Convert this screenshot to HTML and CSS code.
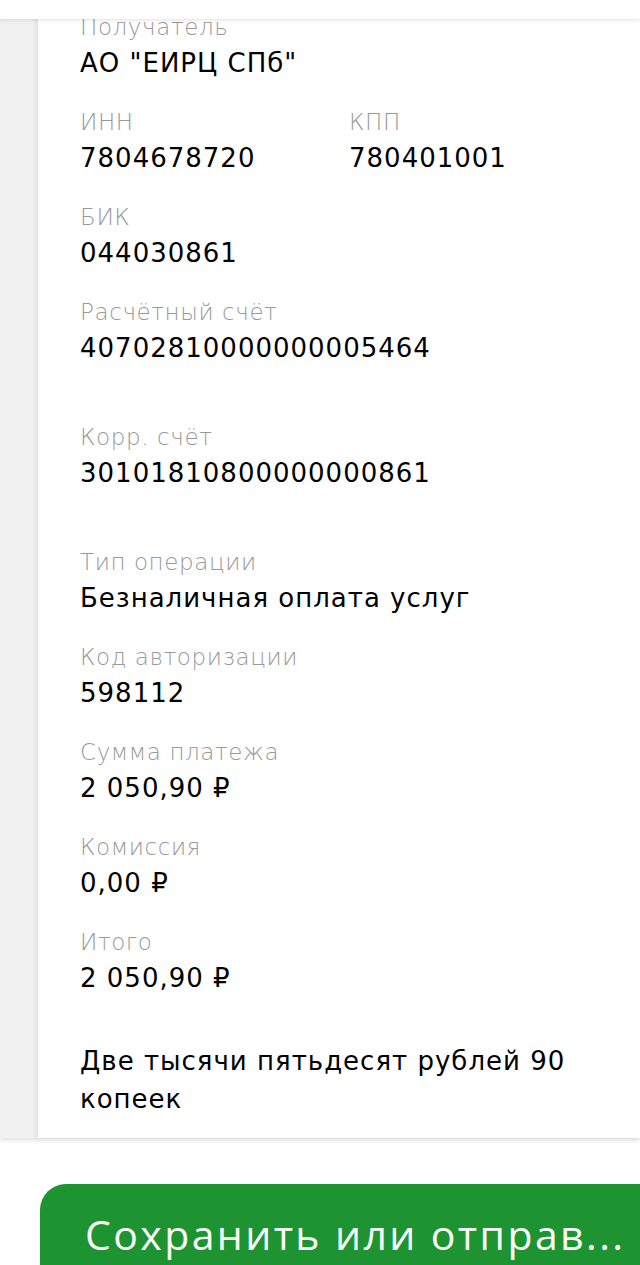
FILE: index.html
```html
<!DOCTYPE html>
<html lang="ru">
<head>
<meta charset="utf-8">
<title>Реквизиты платежа</title>
<link rel="stylesheet" href="styles.css">
</head>
<body>
<div class="topbar"></div>
<div class="main">
  <div class="rail"></div>
  <div class="card">
    <div class="field">
      <div class="label">Получатель</div>
      <div class="value">АО "ЕИРЦ СПб"</div>
    </div>
    <div class="field row">
      <div>
        <div class="label">ИНН</div>
        <div class="value">7804678720</div>
      </div>
      <div>
        <div class="label">КПП</div>
        <div class="value">780401001</div>
      </div>
    </div>
    <div class="field">
      <div class="label">БИК</div>
      <div class="value">044030861</div>
    </div>
    <div class="field extra">
      <div class="label">Расчётный счёт</div>
      <div class="value">40702810000000005464</div>
    </div>
    <div class="field extra">
      <div class="label">Корр. счёт</div>
      <div class="value">30101810800000000861</div>
    </div>
    <div class="field">
      <div class="label">Тип операции</div>
      <div class="value">Безналичная оплата услуг</div>
    </div>
    <div class="field">
      <div class="label">Код авторизации</div>
      <div class="value">598112</div>
    </div>
    <div class="field">
      <div class="label">Сумма платежа</div>
      <div class="value">2 050,90 ₽</div>
    </div>
    <div class="field">
      <div class="label">Комиссия</div>
      <div class="value">0,00 ₽</div>
    </div>
    <div class="field">
      <div class="label">Итого</div>
      <div class="value">2 050,90 ₽</div>
    </div>
    <div class="words">Две тысячи пятьдесят рублей 90 копеек</div>
  </div>
</div>
<div class="actions">
  <button class="save">Сохранить или отправ...</button>
</div>
</body>
</html>
```
FILE: styles.css
```css
html, body {
  margin: 0;
  padding: 0;
}
body {
  width: 640px;
  height: 1265px;
  overflow: hidden;
  background: #ffffff;
  font-family: "DejaVu Sans", "Liberation Sans", sans-serif;
}
.topbar {
  position: relative;
  z-index: 2;
  height: 19px;
  background: #ffffff;
  box-shadow: 0 1px 4px rgba(0, 0, 0, 0.12);
}
.main {
  display: flex;
  margin-top: -19px;
  box-shadow: 0 3px 4px rgba(0, 0, 0, 0.10);
}
.rail {
  width: 38px;
  flex: none;
  background: #f1f1f1;
}
.card {
  flex: 1;
  background: #ffffff;
  padding: 12px 16px 20px 42px;
  box-shadow: -2px 0 4px rgba(0, 0, 0, 0.07);
}
.field {
  margin-bottom: 24px;
}
.field.extra {
  margin-bottom: 54px;
}
.row {
  display: grid;
  grid-template-columns: 269px auto;
}
.label {
  font-size: 23px;
  line-height: 31px;
  color: #999999;
  font-weight: 300;
  letter-spacing: 0.6px;
}
.value {
  font-size: 26px;
  line-height: 40px;
  color: #000000;
  letter-spacing: 1px;
}
.words {
  margin-top: 44px;
  font-size: 26px;
  line-height: 38px;
  color: #000000;
  letter-spacing: 1px;
}
.actions {
  padding: 46px 0 0 40px;
}
.save {
  display: block;
  width: 600px;
  height: 81px;
  border: none;
  border-radius: 26px 0 0 0;
  background: #1e9331;
  color: #fbfff9;
  font-family: "Open Sans", sans-serif;
  font-size: 41px;
  line-height: 56px;
  letter-spacing: 2.4px;
  text-align: left;
  white-space: nowrap;
  overflow: hidden;
  padding: 18px 0 0 45px;
}
```
